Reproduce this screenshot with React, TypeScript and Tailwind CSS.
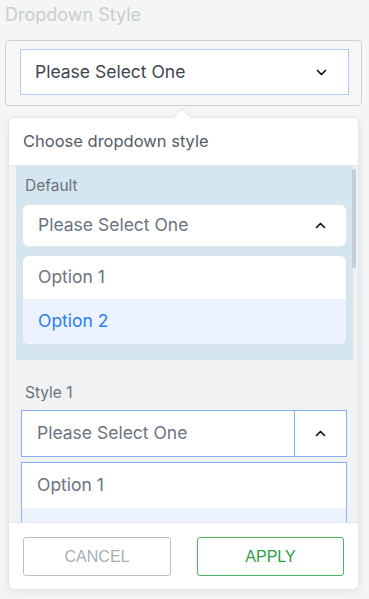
import React from "react";

const Chevron = ({ up = false }: { up?: boolean }) => (
  <svg width="11" height="7" viewBox="0 0 11 7" fill="none" className={up ? "rotate-180" : ""}>
    <path d="M1.5 1.5l4 4 4-4" stroke="#111" strokeWidth="1.7" strokeLinecap="round" strokeLinejoin="round" />
  </svg>
);

export default function App() {
  return (
    <div className="w-[369px] h-[599px] overflow-hidden bg-[#f4f5f5] font-['Inter','Noto_Sans',sans-serif] relative">
      <div className="pl-[5px] pt-[3px] text-[18px] leading-[24px] text-[#c9ced3]">Dropdown Style</div>

      <div className="mt-[13px] ml-[5px] w-[357px] h-[66px] border border-[#cdd1d5] rounded-[4px] bg-[#f6f7f7] pt-[8px] pl-[14px]">
        <div className="w-[329px] h-[46px] border border-[#b4cbf4] bg-white flex items-center justify-between pl-[14px] pr-[21px]">
          <span className="text-[17.5px] text-[#3d4651]">Please Select One</span>
          <Chevron />
        </div>
      </div>

      {/* popover */}
      <div className="relative mt-[11px] ml-[8px] w-[351px] h-[473px] bg-white rounded-[6px] border border-[#e3e7e8] shadow-[0_2px_8px_rgba(0,0,0,0.08)] flex flex-col">
        <div className="absolute -top-[7px] left-[166px] w-[14px] h-[14px] bg-white rotate-45 border-l border-t border-[#e3e7e8]" />
        <div className="relative h-[48px] flex items-center pl-[14px] text-[16.5px] text-[#555d66] border-b border-[#e4e7e9]">
          Choose dropdown style
        </div>

        <div className="relative flex-1 overflow-hidden bg-[#f0f2f3]">
          <div className="ml-[7px] w-[337px] bg-[#d5e6f0] pt-[10px] pb-[15px] px-[6px]">
            <div className="pl-[3px] text-[15.5px] leading-[20px] text-[#6c747c]">Default</div>
            <div className="mt-[8px] h-[43px] bg-white rounded-[7px] border border-[#e2e6e9] flex items-center justify-between pl-[15px] pr-[20px]">
              <span className="text-[17.5px] text-[#6b7480]">Please Select One</span>
              <Chevron up />
            </div>
            <div className="mt-[8px] bg-white rounded-[7px] border border-[#dadfe3] overflow-hidden">
              <div className="h-[43px] flex items-center pl-[15px] text-[17.5px] text-[#6b7480]">Option 1</div>
              <div className="h-[45px] flex items-center pl-[15px] text-[17.5px] text-[#2b7ff0] bg-[#ecf3fe]">Option 2</div>
            </div>
          </div>
          <div className="absolute top-[3px] left-[343px] w-[4px] h-[99px] rounded-full bg-[#c5ced4]" />

          <div className="pl-[16px] pt-[23px] text-[15.5px] leading-[20px] text-[#6c747c]">Style 1</div>
          <div className="mt-[7px] ml-[12px] w-[326px] h-[47px] border border-[#88b0f5] bg-white flex">
            <div className="flex-1 flex items-center pl-[15px] text-[17.5px] text-[#6b7480] border-r border-[#88b0f5]">
              Please Select One
            </div>
            <div className="w-[51px] flex items-center justify-center">
              <Chevron up />
            </div>
          </div>
          <div className="mt-[5px] ml-[12px] w-[326px] border border-[#88b0f5] bg-white">
            <div className="h-[45px] flex items-center pl-[15px] text-[17.5px] text-[#6b7480]">Option 1</div>
            <div className="h-[45px] bg-[#ecf3fe]" />
          </div>
        </div>

        <div className="h-[67px] border-t border-[#e4e7e9] flex items-start pt-[14px] px-[14px] gap-[26px] font-['Liberation_Sans',Arial,sans-serif]">
          <button className="w-[149px] h-[39px] border border-[#bac0c7] rounded-[3px] text-[16px] text-[#a7afb8] bg-white">
            CANCEL
          </button>
          <button className="w-[148px] h-[39px] border border-[#4cb562] rounded-[3px] text-[16px] text-[#2f9e45] bg-white">
            APPLY
          </button>
        </div>
      </div>
    </div>
  );
}
